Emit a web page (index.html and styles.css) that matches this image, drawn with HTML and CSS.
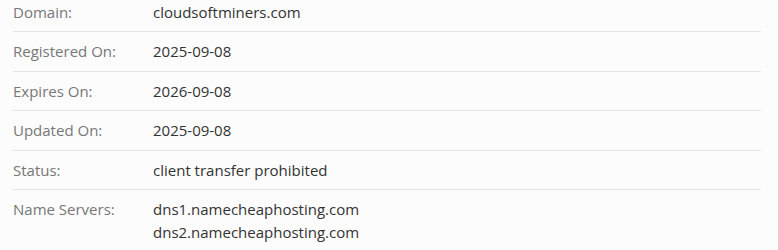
FILE: index.html
```html
<!DOCTYPE html>
<html lang="en">
<head>
    <meta charset="UTF-8">
    <title>Domain Whois</title>
    <link rel="stylesheet" href="styles.css">
</head>
<body>
    <!-- Whois details -->
    <div class="whois">
        <div class="whois-row">
            <div class="whois-label">Domain:</div>
            <div class="whois-value">cloudsoftminers.com</div>
        </div>
        <div class="whois-row">
            <div class="whois-label">Registered On:</div>
            <div class="whois-value">2025-09-08</div>
        </div>
        <div class="whois-row">
            <div class="whois-label">Expires On:</div>
            <div class="whois-value">2026-09-08</div>
        </div>
        <div class="whois-row">
            <div class="whois-label">Updated On:</div>
            <div class="whois-value">2025-09-08</div>
        </div>
        <div class="whois-row">
            <div class="whois-label">Status:</div>
            <div class="whois-value">client transfer prohibited</div>
        </div>
        <div class="whois-row">
            <div class="whois-label">Name Servers:</div>
            <div class="whois-value">
                dns1.namecheaphosting.com<br>
                dns2.namecheaphosting.com
            </div>
        </div>
    </div>
</body>
</html>
```

FILE: styles.css
```css
body {
    background-color: #fcfcfc;
    font-family: "Open Sans", Arial, sans-serif;
    font-size: 15px;
    line-height: 1.5;
    margin: 0;
    padding: 0;
}

.whois {
    margin: -7.5px 17px 0 13px;
}

.whois-row {
    display: flex;
    padding: 8px 0;
    border-bottom: 1px solid #e3e3e3;
}

.whois-row:last-child {
    border-bottom: none;
}

.whois-label {
    width: 140px;
    flex-shrink: 0;
    color: #777;
}

.whois-value {
    color: #333;
}
```
